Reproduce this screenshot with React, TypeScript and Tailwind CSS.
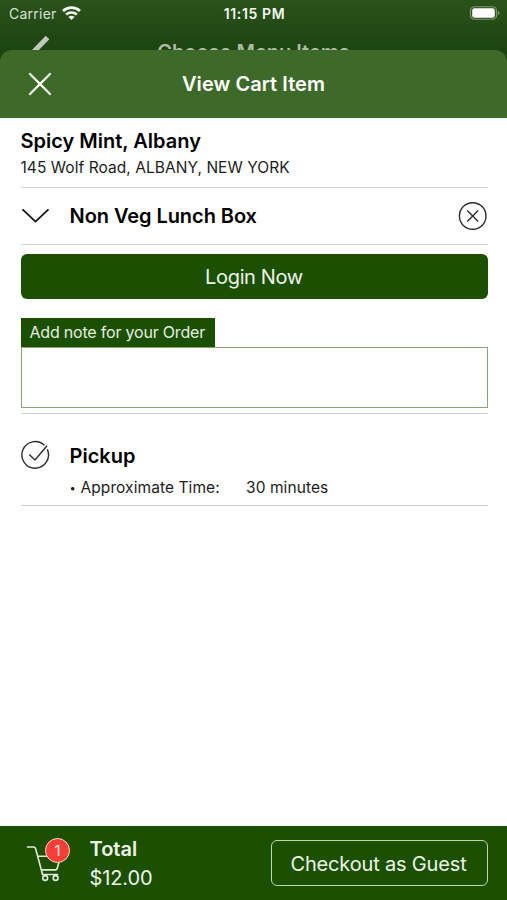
import React from 'react';

interface Cart {
  store: string;
  address: string;
  item: string;
  count: number;
  total: number;
  pickupMinutes: number;
}

const cart: Cart = {
  store: 'Spicy Mint, Albany',
  address: '145 Wolf Road, ALBANY, NEW YORK',
  item: 'Non Veg Lunch Box',
  count: 1,
  total: 12,
  pickupMinutes: 30,
};

function StatusBar() {
  return (
    <div className="grid h-[28px] grid-cols-[1fr_auto_1fr] items-center pl-[9px] pr-[7px] text-[#f3f6f1]">
      <div className="flex items-center gap-[5px]">
        <span className="text-[14px] leading-[18px] tracking-[0.25px] text-[#d9e1d5]">Carrier</span>
        <svg className="-mt-[2px]" width="19" height="14" viewBox="0 0 19 14" fill="none" stroke="currentColor" strokeWidth="2.7">
          <path d="M1 5C5.7.5 13.3.5 18 5" />
          <path d="M4.1 8.6c3-2.8 7.8-2.8 10.8 0" />
          <path d="M9.5 14 6.4 11c1.7-1.6 4.5-1.6 6.2 0Z" fill="currentColor" stroke="none" />
        </svg>
      </div>
      <span className="whitespace-nowrap text-center text-[14px] font-semibold leading-[18px] tracking-[0.65px]">11:15 PM</span>
      <svg className="-mt-[2px] justify-self-end" width="31" height="14" viewBox="0 0 31 14">
        <rect x="1.5" y="0.75" width="26" height="12.5" rx="3.8" fill="none" stroke="#7d9672" strokeWidth="1.2" />
        <rect x="3.2" y="2.3" width="22.6" height="9.4" rx="2.2" fill="#fff" />
        <path d="M28.9 4.7c2 .7 2 3.9 0 4.6Z" fill="#7d9672" />
      </svg>
    </div>
  );
}

// The menu screen that stays visible behind the sheet
function MenuHeader() {
  return (
    <div className="grid h-[22px] grid-cols-[1fr_auto_1fr] text-[#afb9aa]">
      <svg className="ml-[30px] mt-[8px]" width="20" height="32" viewBox="0 0 20 32" fill="none" stroke="#c1c8bd" strokeWidth="5">
        <path d="M17.5 1.5 3.5 16l14 14.5" />
      </svg>
      <span className="mt-[12px] text-[20px] font-semibold leading-[24px]">Choose Menu Items</span>
    </div>
  );
}

function SheetHeader() {
  return (
    <header className="relative grid h-[68px] grid-cols-[1fr_auto_1fr] items-center rounded-t-[12px] bg-[#3d6a28] text-white">
      <button aria-label="Close" className="ml-[28px] w-[24px]">
        <svg width="24" height="24" viewBox="0 0 24 24" fill="none" stroke="currentColor" strokeWidth="2.2" strokeLinecap="round">
          <path d="M2 2l20 20M22 2 2 22" />
        </svg>
      </button>
      <h1 className="text-[20px] font-semibold leading-[24px] tracking-[0.05px]">View Cart Item</h1>
    </header>
  );
}

function CartIcon() {
  return (
    <svg width="40" height="42" viewBox="0 0 40 42" fill="none" stroke="#e4ebe0" strokeWidth="1.6" strokeLinecap="round" strokeLinejoin="round">
      <path d="M1.5 7H7.5q1.7 0 2.1 1.6L16.5 34.3" />
      <path d="M12.3 16.3H34.5L31.2 28.5q-.4 1.4-1.8 1.4H15.6" />
      <path d="M16.5 34.5H31.5" />
      <circle cx="19.2" cy="38" r="2.4" />
      <circle cx="29.6" cy="38" r="2.4" />
    </svg>
  );
}

function CartFooter() {
  return (
    <footer className="flex h-[74px] items-start bg-[#1b5000] pl-[26px] pr-[19.5px] text-[#eef3eb]">
      <div className="relative mt-[14px] w-[63.5px]">
        <CartIcon />
        <span className="absolute left-[19px] top-[-2px] flex size-[25px] items-center justify-center rounded-full border border-[#f0d9d0] bg-[#fc3d36] text-[15px] leading-none">
          {cart.count}
        </span>
      </div>
      <div className="mt-[10px] flex-1">
        <p className="text-[20px] font-semibold leading-[26px]">Total</p>
        <p className="mt-[3px] text-[20px] leading-[26px] tracking-[-0.1px]">${cart.total.toFixed(2)}</p>
      </div>
      <button className="mt-[14px] h-[46px] w-[217px] rounded-[6px] border-[1.5px] border-[#c3d2bc] pt-[2px] pr-[1px] text-[20px] tracking-[-0.17px]">
        Checkout as Guest
      </button>
    </footer>
  );
}

export default function App() {
  return (
    <div className="flex h-[900px] w-full flex-col bg-white font-['Inter','Liberation_Sans',sans-serif] text-black">
      <div className="bg-gradient-to-b from-[#2b521a] to-[#1c4410] to-45%">
        <StatusBar />
        <MenuHeader />
        <SheetHeader />
      </div>

      <main className="flex-1 pl-[20.5px] pr-[19.5px]">
        <section className="h-[70px] border-b border-[#cfcfcf] pt-[10px]">
          <h2 className="text-[20px] font-semibold leading-[26px]">{cart.store}</h2>
          <p className="mt-[4px] text-[15.5px] leading-[20px] tracking-[0.05px] text-[#1c1c1c]">{cart.address}</p>
        </section>

        <section className="flex h-[57px] items-center border-b border-[#cfcfcf]">
          <svg width="29" height="30" viewBox="0 0 29 30" fill="none" stroke="#111" strokeWidth="1.8">
            <path d="M1.5 8.3 14.5 20.6 27.5 8.3" />
          </svg>
          <h3 className="ml-[20px] flex-1 text-[20px] font-semibold leading-[26px] tracking-[-0.06px]">{cart.item}</h3>
          <button aria-label="Remove item">
            <svg width="30" height="29" viewBox="0 0 30 29" fill="none" stroke="#2c2c2c" strokeWidth="1.4">
              <circle cx="14.7" cy="14" r="13.3" />
              <path d="M9.2 8.5l11 11M20.2 8.5l-11 11" />
            </svg>
          </button>
        </section>

        <button className="mt-[9px] h-[45px] w-full rounded-[6px] bg-[#1b5000] text-[20px] tracking-[-0.35px] text-[#eef3eb]">
          Login Now
        </button>

        <section className="mt-[19px] border-b border-[#d0d0d0] pb-[5px]">
          <label htmlFor="note" className="flex h-[29px] w-[194.5px] items-center bg-[#1b5000] pb-[1px] pl-[9px] text-[16px] tracking-[-0.2px] text-[#e6ede2]">
            Add note for your Order
          </label>
          <div className="h-[61px] border border-[#86a873]">
            <textarea id="note" className="block h-full w-full resize-none appearance-none outline-none" />
          </div>
        </section>

        <section className="flex h-[92px] border-b border-[#cfcfcf]">
          <svg className="mt-[26px]" width="29" height="30" viewBox="0 0 29 30" fill="none" stroke="#2c2c2c" strokeWidth="1.4">
            <path d="M26.3 9.4A13.3 13.3 0 1 1 23.4 5.3" />
            <path d="M8.3 14.5l5.7 5.5L26 5.7" />
          </svg>
          <div className="ml-[20px] pt-[29px]">
            <h3 className="text-[20px] font-semibold leading-[26px]">Pickup</h3>
            <div className="mt-[9px] flex text-[15.5px] leading-[20px] text-[#1c1c1c]">
              <span className="w-[176.5px] tracking-[0.08px]">
                <span className="mr-[5px] inline-block w-[6px] align-[1px] text-[11px] leading-none">•</span>
                Approximate Time:
              </span>
              <span className="tracking-[0.08px]">{cart.pickupMinutes} minutes</span>
            </div>
          </div>
        </section>
      </main>

      <CartFooter />
    </div>
  );
}
